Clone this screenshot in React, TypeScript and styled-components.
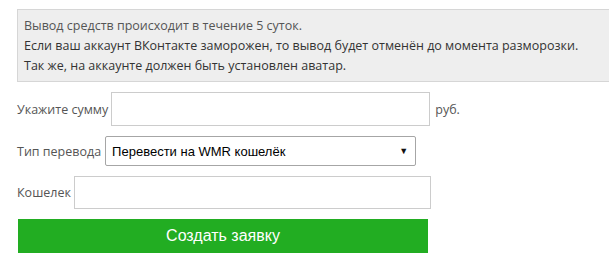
import React from "react";
import styled, { createGlobalStyle } from "styled-components";

const Global = createGlobalStyle`
  html, body { margin: 0; padding: 0; background: #fff; overflow: hidden; }
  body { font-family: "Segoe UI", "Open Sans", "Noto Sans", sans-serif; }
`;

const Page = styled.div`
  padding: 9px 0 0 17px;
  display: flex;
  flex-direction: column;
  align-items: flex-start;
  gap: 10px;
`;

const Notice = styled.div`
  align-self: stretch;
  box-sizing: border-box;
  background: #eeeeee;
  border: 1px solid #d6d6d6;
  border-right: none;
  padding: 6px 8px 5px 6px;
  font-size: 12.5px;
  line-height: 20px;
  color: #333;
  overflow: hidden;
`;

const Line = styled.div<{ $light?: boolean }>`
  color: ${(p) => (p.$light ? "#555" : "#333")};
  white-space: nowrap;
`;

const Row = styled.div`
  display: flex;
  align-items: center;
  gap: 3px;
`;

const Label = styled.label`
  font-size: 12.5px;
  color: #555;
  white-space: nowrap;
`;

const Input = styled.input<{ $w: number; $h: number }>`
  box-sizing: border-box;
  width: ${(p) => p.$w}px;
  height: ${(p) => p.$h}px;
  border: 1px solid #cccccc;
  background: #fff;
  margin: 0;
  padding: 0 6px;
  outline: none;
`;

const Suffix = styled.span`
  font-size: 12.5px;
  color: #555;
  margin-left: 2px;
`;

const Select = styled.div`
  box-sizing: border-box;
  width: 311px;
  height: 30px;
  margin-left: 1px;
  border: 1px solid #a6a6a6;
  border-radius: 2px;
  background: #fff;
  display: flex;
  align-items: center;
  justify-content: space-between;
  padding: 0 7px 0 6px;
  font-family: "Liberation Sans", Arial, sans-serif;
  font-size: 13px;
  color: #000;
`;

const Arrow = styled.span`
  font-size: 9px;
  color: #111;
`;

const Button = styled.button`
  box-sizing: border-box;
  width: 410px;
  height: 34px;
  margin-left: 1px;
  border: none;
  background: #22ad22;
  color: #fff;
  font-family: "Liberation Sans", Arial, sans-serif;
  font-size: 16px;
  padding: 0;
  cursor: pointer;
`;

export default function App() {
  return (
    <>
      <Global />
      <Page>
        <Notice>
          <Line $light>Вывод средств происходит в течение 5 суток.</Line>
          <Line>
            Если ваш аккаунт ВКонтакте заморожен, то вывод будет отменён до момента разморозки.
          </Line>
          <Line>Так же, на аккаунте должен быть установлен аватар.</Line>
        </Notice>
        <Row>
          <Label>Укажите сумму</Label>
          <Input $w={319} $h={34} />
          <Suffix>руб.</Suffix>
        </Row>
        <Row>
          <Label>Тип перевода</Label>
          <Select>
            <span>Перевести на WMR кошелёк</span>
            <Arrow>▼</Arrow>
          </Select>
        </Row>
        <Row>
          <Label>Кошелек</Label>
          <Input $w={357} $h={33} />
        </Row>
        <Button>Создать заявку</Button>
      </Page>
    </>
  );
}
